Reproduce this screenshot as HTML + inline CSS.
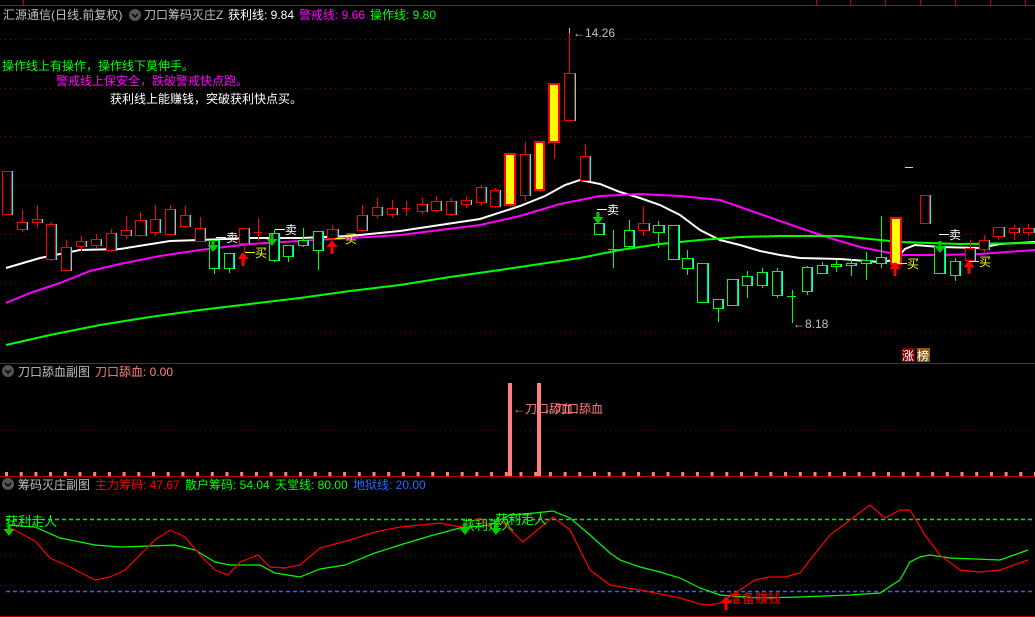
<!DOCTYPE html>
<html><head><meta charset="utf-8"><style>
html,body{margin:0;padding:0;background:#000;}
body{width:1035px;height:617px;overflow:hidden;position:relative;font-family:"Liberation Sans","Noto Sans CJK SC",sans-serif;}
svg{position:absolute;left:0;top:0;}
svg text{font-family:"Liberation Sans","Noto Sans CJK SC",sans-serif;}
</style></head><body>
<svg id="s" width="1035" height="617" xmlns="http://www.w3.org/2000/svg"></svg>
<script>
var o=[];
function L(x1,y1,x2,y2,c,w,d){o.push('<line x1="'+x1+'" y1="'+y1+'" x2="'+x2+'" y2="'+y2+'" stroke="'+c+'" stroke-width="'+(w||1)+'"'+(d?' stroke-dasharray="'+d+'"':'')+'/>');}
function P(pts,c,w){o.push('<polyline fill="none" stroke="'+c+'" stroke-width="'+w+'" points="'+pts.map(function(p){return p.join(",")}).join(" ")+'"/>');}
function T(x,y,s,c,fs){o.push('<text x="'+x+'" y="'+y+'" fill="'+c+'" font-size="'+(fs||12)+'">'+s+'</text>');}
L(0,5.5,1035,5.5,"#c00000");L(23.5,0,23.5,5,"#c00000");
[816,850,885,920,955,990,1025].forEach(function(x){L(x+.5,0,x+.5,5,"#c00000");});
[39,88,136,185,234,283,332].forEach(function(y){L(0,y+.5,1035,y+.5,"#800000",1,"1 4");});
L(0,363.5,1035,363.5,"#c00000");
L(0,430.5,1035,430.5,"#800000",1,"1 4");
L(0,476.5,1035,476.5,"#c00000");
[525,555,585].forEach(function(y){L(0,y+.5,1035,y+.5,"#800000",1,"1 4");});
L(0,616.5,1035,616.5,"#c00000");
for(var x=5;x<1035;x+=14.7){o.push('<rect x="'+x.toFixed(1)+'" y="472" width="3" height="4" fill="#ff8080"/>');}
P([[6,268],[40,258],[80,250],[120,249],[170,241],[200,240],[250,238],[300,238],[350,236],[400,231],[440,225],[480,219],[520,206],[545,196],[565,185],[580,180],[600,184],[620,192],[640,198],[660,205],[680,215],[700,230],[720,240],[740,245],[760,251],[780,255],[800,258],[840,259],[880,262],[895,260],[905,249],[915,245],[940,247],[980,248],[1000,244],[1035,242]],"#fff",2);
P([[6,303],[30,293],[60,283],[90,271],[120,264],[160,256],[200,250],[250,244],[300,241],[350,238],[400,235],[440,230],[480,225],[520,216],[560,204],[600,196],[640,194],[680,196],[720,200],[760,214],[800,228],[830,238],[860,247],[900,255],[940,255],[980,254],[1035,250]],"#ff00ff",2);
P([[6,345],[50,335],[100,325],[150,317],[200,310],[250,304],[300,298],[350,291],[400,285],[450,277],[500,270],[540,264],[580,258],[620,250],[660,244],[700,240],[740,237],[780,236],[840,236],[880,240],[900,242],[960,244],[1035,243]],"#00ff00",2);
var C=[[2,11,171,214,171,214,'r'],[17,26,222,229,210,232,'r'],[32,41,219,222,205,228,'r'],[46,55,224,259,222,261,'r'],[61,70,247,270,240,270,'r'],[76,85,241,246,236,251,'r'],[91,100,239,245,234,248,'r'],[106,115,233,250,229,252,'r'],[121,130,230,235,216,239,'r'],[135,145,220,235,212,237,'r'],[150,159,219,232,205,236,'r'],[165,174,209,234,205,234,'r'],[180,189,215,226,206,228,'r'],[195,204,228,241,217,241,'r'],[209,218,240,268,240,274,'g'],[224,233,253,268,253,273,'g'],[239,248,228,243,228,252,'r'],[254,262,232,233,218,241,'r'],[269,278,233,260,230,262,'g'],[283,292,245,256,245,262,'g'],[298,307,240,245,228,247,'g'],[313,322,231,250,231,270,'g'],[327,337,229,238,225,240,'r'],[357,366,215,230,205,232,'r'],[372,381,207,215,198,218,'r'],[387,396,208,214,200,218,'r'],[402,410,208,209,201,216,'r'],[417,426,204,211,198,214,'r'],[431,440,201,210,196,212,'r'],[446,455,201,214,198,216,'r'],[461,470,200,204,196,208,'r'],[476,485,187,202,185,206,'r'],[490,499,190,206,188,208,'r'],[505,515,154,205,154,208,'y'],[520,529,154,195,142,201,'r'],[535,544,142,190,142,192,'y'],[549,559,84,142,84,159,'y'],[564,574,73,120,28,120,'r'],[580,589,156,180,144,180,'r'],[594,603,223,234,223,234,'g'],[608,618,249,250,230,268,'g'],[624,633,230,246,220,248,'g'],[638,648,223,230,206,236,'r'],[653,663,225,232,221,248,'g'],[668,678,225,259,225,259,'g'],[682,692,258,268,250,275,'g'],[697,707,263,302,263,302,'g'],[713,722,299,308,299,322,'g'],[727,737,279,305,279,305,'g'],[742,751,276,285,271,298,'g'],[757,766,272,285,268,288,'g'],[772,781,271,295,268,298,'g'],[787,796,296,297,290,323,'g'],[802,811,267,291,266,295,'g'],[817,826,265,273,262,273,'g'],[831,840,264,266,260,272,'g'],[846,855,263,265,259,276,'g'],[861,870,260,263,252,280,'g'],[876,885,257,263,216,268,'g'],[891,901,218,264,218,264,'y'],[920,929,195,223,195,223,'r'],[934,944,246,273,246,273,'g'],[950,959,261,275,258,281,'g'],[965,974,248,260,240,262,'r'],[979,988,240,249,235,252,'r'],[993,1003,227,236,227,240,'r'],[1009,1018,228,232,225,240,'r'],[1023,1033,228,232,224,236,'r']];
C.forEach(function(c){var m=Math.round((c[0]+c[1])/2)+.5,col=c[6]=='g'?'#00ff00':'#ff0000';
L(m,c[4],m,c[5],col);
var h=c[3]-c[2];
if(h<2){L(c[0],c[2]+.5,c[1],c[2]+.5,col);return;}
if(c[6]=='y'){o.push('<rect x="'+c[0]+'" y="'+c[2]+'" width="'+(c[1]-c[0])+'" height="'+h+'" fill="#ffff00" stroke="#ff0000" stroke-width="2"/>');return;}
o.push('<rect x="'+(c[0]+1.5)+'" y="'+(c[2]+.5)+'" width="'+(c[1]-c[0])+'" height="'+h+'" fill="none" stroke="#00ffff"/>');
o.push('<rect x="'+(c[0]+.5)+'" y="'+(c[2]+.5)+'" width="'+(c[1]-c[0])+'" height="'+h+'" fill="#000" stroke="'+col+'"/>');});
L(905,167.5,913,167.5,"#ffcc66");
function DA(x,y){o.push('<path d="M'+(x-1.5)+' '+(y-10)+'h3v5h4l-5.5 7l-5.5-7h4z" fill="#00cc00"/>');}
function UA(x,y){o.push('<path d="M'+x+' '+(y-10)+'l5.5 7h-4v7h-3v-7h-4z" fill="#ff0000"/>');}
[[213,250],[272,244],[598,222],[940,251]].forEach(function(a){DA(a[0],a[1]);});
[[243,262],[332,250],[895,272],[969,270]].forEach(function(a){UA(a[0],a[1]);});
[[216,242],[275,234],[597,214],[939,239]].forEach(function(a){L(a[0],a[1]-4.5,a[0]+10,a[1]-4.5,"#fff");T(a[0]+10,a[1],"卖","#fff");});
[[245,257],[335,243],[897,268],[969,266]].forEach(function(a){L(a[0],a[1]-4.5,a[0]+10,a[1]-4.5,"#ffff00");T(a[0]+10,a[1],"买","#ffff00");});
T(573,37,"←14.26","#c0c0c0");L(569.5,28,569.5,33,"#c0c0c0");
T(793,328,"←8.18","#c0c0c0");
o.push('<rect x="902" y="348" width="13" height="14" fill="#800000"/><rect x="917" y="348" width="13" height="14" fill="#8b5a10"/>');
T(902,360,"涨","#fff",12);T(917,360,"榜","#fff",12);
function circ(x,y){o.push('<circle cx="'+x+'" cy="'+y+'" r="6" fill="#555"/><path d="M'+(x-3)+' '+(y-1)+'l3 3l3-3" stroke="#000" stroke-width="1.5" fill="none"/>');}
T(3,19,"汇源通信(日线.前复权)","#c0c0c0",12);circ(135,15);
T(144,19,"刀口筹码灭庄Z","#c0c0c0",12);T(228,19,"获利线: 9.84","#fff",12);T(299,19,"警戒线: 9.66","#ff00ff",12);T(370,19,"操作线: 9.80","#00ff00",12);
T(2,70,"操作线上有操作，操作线下莫伸手。","#00ff00",12);
T(56,85,"警戒线上保安全，跌破警戒快点跑。","#ff00ff",12);
T(110,103,"获利线上能赚钱，突破获利快点买。","#fff",12);
circ(8,371);
T(18,376,"刀口舔血副图","#c0c0c0",12);T(95,376,"刀口舔血: 0.00","#ff8080",12);
o.push('<rect x="508" y="383" width="4" height="93" fill="#ff8080"/><rect x="537" y="383" width="4" height="93" fill="#ff8080"/>');
T(513,413,"←刀口舔血","#ff8080",12);T(543,413,"←刀口舔血","#ff8080",12);
circ(8,484);
T(18,489,"筹码灭庄副图","#c0c0c0",12);T(95,489,"主力筹码: 47.67","#ff0000",12);T(185,489,"散户筹码: 54.04","#00ff00",12);T(275,489,"天堂线: 80.00","#00ff00",12);T(353,489,"地狱线: 20.00","#1e6cff",12);
L(6,519.5,1035,519.5,"#00ee00",1.5,"4 3");
L(6,591.5,1035,591.5,"#1e6cff",1.5,"4 3");
P([[8,525],[35,527],[60,538],[95,545],[120,547],[150,546],[175,545],[195,550],[215,562],[230,565],[260,565],[275,573],[300,577],[320,569],[345,565],[375,553],[400,545],[430,536],[460,528],[490,525],[510,515],[535,513],[553,511],[570,518],[590,535],[610,553],[620,560],[640,567],[660,572],[680,578],[700,588],[720,595],[760,598],[800,597],[850,595],[880,593],[900,580],[910,562],[920,557],[930,555],[950,558],[1000,560],[1028,550]],"#00ff00",1.2);
P([[8,527],[20,533],[35,541],[50,558],[70,567],[95,580],[110,577],[125,570],[140,555],[155,540],[170,530],[185,537],[200,555],[215,570],[228,575],[240,562],[258,555],[270,567],[285,568],[300,565],[320,548],[350,540],[375,532],[400,527],[420,525],[440,523],[460,527],[480,518],[495,532],[500,520],[523,542],[553,517],[570,530],[590,570],[610,585],[640,590],[680,598],[700,604],[710,605],[720,603],[740,590],[755,580],[770,577],[785,577],[800,573],[810,560],[830,535],[850,520],[870,505],[885,518],[900,510],[910,510],[925,535],[940,555],[960,570],[980,572],[1000,570],[1028,560]],"#ff0000",1.2);
T(5,526,"获利走人","#00ff00",13);T(462,530,"获利走人","#00ff00",13);T(495,524,"获利走人","#00ff00",13);
DA(9,534);DA(465,533);DA(496,533);
UA(726,606);T(729,603,"准备赚钱","#ff0000",13);
document.getElementById("s").innerHTML=o.join("");
</script>
</body></html>
